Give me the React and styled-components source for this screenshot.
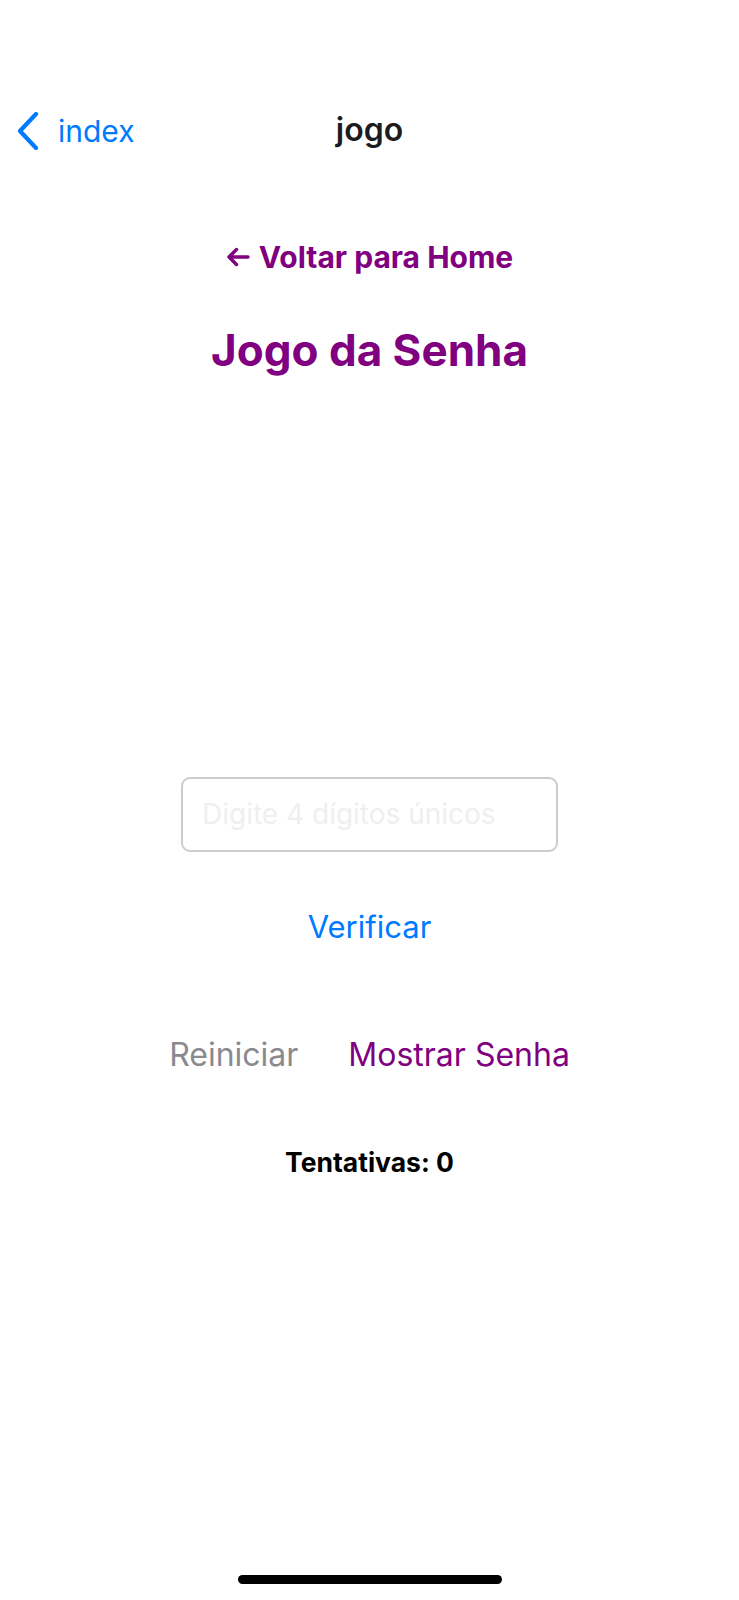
import React from "react";
import styled, { createGlobalStyle } from "styled-components";

const GlobalStyle = createGlobalStyle`
  html, body {
    margin: 0;
    padding: 0;
    background: #ffffff;
    font-family: Inter, "Noto Sans", "Liberation Sans", sans-serif;
  }
  * { box-sizing: border-box; }
`;

const Page = styled.div`
  min-height: 100vh;
  display: flex;
  flex-direction: column;
  align-items: stretch;
  background: #ffffff;
`;

const NavBar = styled.div`
  margin-top: 100px;
  height: 61px;
  display: grid;
  grid-template-columns: 1fr auto 1fr;
  align-items: center;
  padding: 0 17px;
`;

const BackLink = styled.div`
  display: flex;
  align-items: center;
  gap: 19px;
  color: #007aff;
  font-size: 30px;
  line-height: 1.2;
  justify-self: start;
`;

const NavTitle = styled.div`
  font-size: 32px;
  font-weight: 600;
  line-height: 1.2;
  color: #1c1c1e;
`;

const Content = styled.div`
  display: flex;
  flex-direction: column;
  align-items: center;
`;

const HomeLink = styled.div`
  margin-top: 78px;
  display: flex;
  align-items: center;
  gap: 9px;
  color: #800080;
  font-size: 30px;
  font-weight: 700;
  line-height: 1.2;
`;

const Title = styled.h1`
  margin: 49px 0 0;
  color: #800080;
  font-size: 44px;
  font-weight: 700;
  line-height: 1.2;
`;

const AttemptsList = styled.div`
  height: 400px;
  width: 100%;
`;

const GuessInput = styled.input`
  width: 377px;
  height: 75px;
  border: 2px solid #cccccc;
  border-radius: 9px;
  padding: 0 19px;
  font-family: inherit;
  font-size: 28px;
  color: #000;
  background: #fff;
  outline: none;
  &::placeholder {
    color: #efefef;
  }
`;

const TextButton = styled.button`
  background: none;
  border: none;
  padding: 0;
  font-family: inherit;
  font-size: ${(p) => p.$size || 32}px;
  line-height: 1.2;
  color: ${(p) => p.$color};
  cursor: pointer;
`;

const VerifyButton = styled(TextButton)`
  margin-top: 56px;
`;

const ButtonRow = styled.div`
  margin-top: 91px;
  display: flex;
  gap: 50px;
  align-items: center;
`;

const Attempts = styled.div`
  margin-top: 73px;
  font-size: 26.5px;
  font-weight: 700;
  line-height: 1.2;
  color: #000;
`;

const Spacer = styled.div`
  flex: 1;
`;

const HomeIndicator = styled.div`
  align-self: center;
  width: 264px;
  height: 9px;
  border-radius: 5px;
  background: #000;
  margin-bottom: 16px;
`;

const Chevron = () => (
  <svg width="22" height="38" viewBox="0 0 22 38" fill="none">
    <path
      d="M19 2 L3 19 L19 36"
      stroke="#007aff"
      strokeWidth="4.2"
      strokeLinecap="round"
      strokeLinejoin="round"
    />
  </svg>
);

const ArrowLeft = () => (
  <svg width="24" height="20" viewBox="0 0 24 20" fill="none">
    <path
      d="M22 10 H3 M10.5 2.5 L3 10 L10.5 17.5"
      stroke="#800080"
      strokeWidth="3.4"
      strokeLinecap="round"
      strokeLinejoin="round"
    />
  </svg>
);

export default function App() {
  return (
    <>
      <GlobalStyle />
      <Page>
        <NavBar>
          <BackLink>
            <Chevron />
            <span>index</span>
          </BackLink>
          <NavTitle>jogo</NavTitle>
          <div />
        </NavBar>
        <Content>
          <HomeLink>
            <ArrowLeft />
            <span>Voltar para Home</span>
          </HomeLink>
          <Title>Jogo da Senha</Title>
          <AttemptsList />
          <GuessInput placeholder="Digite 4 dígitos únicos" />
          <VerifyButton $color="#007aff" $size={31}>Verificar</VerifyButton>
          <ButtonRow>
            <TextButton $color="#8a8a8e">Reiniciar</TextButton>
            <TextButton $color="#800080">Mostrar Senha</TextButton>
          </ButtonRow>
          <Attempts>Tentativas: 0</Attempts>
        </Content>
        <Spacer />
        <HomeIndicator />
      </Page>
    </>
  );
}
